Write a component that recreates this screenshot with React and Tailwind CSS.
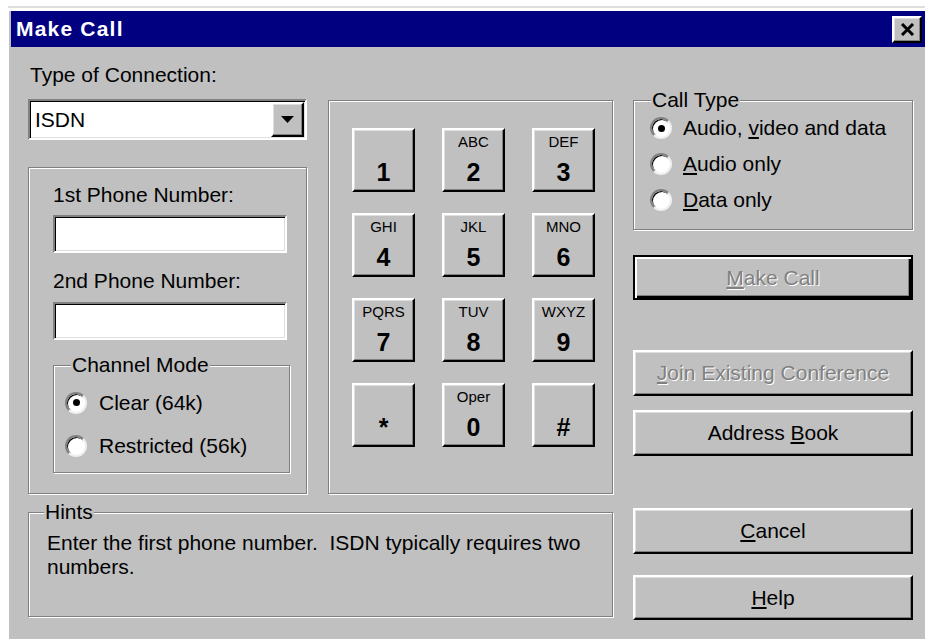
import React from "react";

// Win95-style bevels and borders
const raised =
  "border-2 border-t-white border-l-white border-r-black border-b-black shadow-[inset_-1px_-1px_0_#808080,inset_1px_1px_0_#dfdfdf] bg-[#c0c0c0]";
const sunken =
  "border-2 border-t-[#808080] border-l-[#808080] border-r-white border-b-white shadow-[inset_1px_1px_0_#000,inset_-1px_-1px_0_#dfdfdf] bg-white";
const etched = "border border-[#808080] shadow-[inset_1px_1px_0_#fff,1px_1px_0_#fff]";
const legendCls = "bg-[#c0c0c0] px-[1px] leading-[24px]";

const keys = [
  ["", "1"],
  ["ABC", "2"],
  ["DEF", "3"],
  ["GHI", "4"],
  ["JKL", "5"],
  ["MNO", "6"],
  ["PQRS", "7"],
  ["TUV", "8"],
  ["WXYZ", "9"],
  ["", "*"],
  ["Oper", "0"],
  ["", "#"],
];

function Radio({ checked }) {
  return (
    <span className="flex h-[22px] w-[22px] shrink-0 items-center justify-center rounded-full border-2 border-t-[#808080] border-l-[#808080] border-r-[#efefef] border-b-[#efefef] bg-white shadow-[inset_1px_1px_0_#000]">
      {checked && <span className="h-[7px] w-[7px] rounded-full bg-black" />}
    </span>
  );
}

function RadioRow({ checked, children, className = "" }) {
  return (
    <div className={`flex items-center ${className}`}>
      <Radio checked={checked} />
      <span className="whitespace-nowrap">{children}</span>
    </div>
  );
}

function Key({ letters, digit }) {
  return (
    <div className={`flex h-[64px] w-[63px] flex-col items-center ${raised}`}>
      <div className="mt-[4px] h-[16px] text-[15px] leading-[16px]">{letters || "\u00a0"}</div>
      <div className="mt-[8px] text-[25px] font-bold leading-[28px]">{digit}</div>
    </div>
  );
}

function Button({ children, disabled, primary, className = "" }) {
  const frame = primary
    ? "border-2 border-black bg-[#c0c0c0] shadow-[inset_2px_2px_0_#fff,inset_-2px_-2px_0_#000,inset_-3px_-3px_0_#808080]"
    : raised;
  const text = disabled ? "text-[#808080] [text-shadow:1px_1px_0_#fff]" : "text-black";
  return (
    <div className={`flex w-[280px] items-center justify-center ${frame} ${text} ${className}`}>
      <span className="whitespace-nowrap">{children}</span>
    </div>
  );
}

export default function App() {
  return (
    <div className="flex h-[639px] w-[925px] flex-col overflow-hidden bg-white font-['Liberation_Sans',Arial,sans-serif] text-[21px] leading-[24px] text-black">
      <div className="h-[6px]" />
      <div className="ml-[8px] h-[2px] bg-[#dedede]" />
      <div className="h-[3px]" />

      <div className="ml-[9px] flex flex-1 flex-col bg-[#c0c0c0]">
        {/* title bar */}
        <div className="ml-[2px] flex h-[36px] items-center bg-[#000080] pl-[5px] pr-[3px]">
          <span className="text-[21px] font-bold tracking-[1.2px] text-white">Make Call</span>
          <div className={`ml-auto flex h-[27px] w-[30px] items-center justify-center ${raised}`}>
            <svg width="15" height="13" viewBox="0 0 15 13">
              <path d="M2 1 L13 12 M13 1 L2 12" stroke="#000" strokeWidth="3" />
            </svg>
          </div>
        </div>

        <div className="flex pl-[19px]">
          {/* left area: connection, numbers, keypad, hints */}
          <div className="flex w-[585px] flex-col">
            <div className="flex items-start">
              <div className="flex w-[279px] flex-col">
                <div className="mt-[16px] pl-[2px]">Type of Connection:</div>
                <div className={`mt-[12px] flex h-[41px] items-center ${sunken}`}>
                  <span className="pl-[5px]">ISDN</span>
                  <div className={`ml-auto mr-[1px] flex h-[35px] w-[33px] items-center justify-center ${raised}`}>
                    <svg width="13" height="7" viewBox="0 0 13 7">
                      <polygon points="0,0 13,0 6.5,7" fill="#000" />
                    </svg>
                  </div>
                </div>

                <div className={`mt-[27px] flex h-[327px] flex-col pl-[24px] pt-[15px] ${etched}`}>
                  <div>1st Phone Number:</div>
                  <div className={`mt-[8px] h-[38px] w-[234px] ${sunken}`} />
                  <div className="mt-[16px]">2nd Phone Number:</div>
                  <div className={`mt-[9px] h-[38px] w-[234px] ${sunken}`} />
                  <fieldset className={`mt-[13px] h-[120px] w-[237px] pl-[11px] ${etched}`}>
                    <legend className={`ml-[6px] ${legendCls}`}>Channel Mode</legend>
                    <RadioRow checked className="mt-[4px] h-[43px] gap-[12px]">
                      Clear (64k)
                    </RadioRow>
                    <RadioRow className="h-[43px] gap-[12px]">Restricted (56k)</RadioRow>
                  </fieldset>
                </div>
              </div>

              {/* dial pad */}
              <div className={`ml-[21px] mt-[53px] h-[394px] w-[285px] pl-[23px] pt-[27px] ${etched}`}>
                <div className="grid grid-cols-[63px_63px_63px] gap-x-[27px] gap-y-[21px]">
                  {keys.map(([letters, digit]) => (
                    <Key key={digit} letters={letters} digit={digit} />
                  ))}
                </div>
              </div>
            </div>

            <fieldset className={`mt-[6px] h-[117px] pl-[18px] ${etched}`}>
              <legend className={`ml-[-3px] ${legendCls}`}>Hints</legend>
              <div className="mt-[7px] whitespace-pre">
                {"Enter the first phone number.  ISDN typically requires two"}
                <br />
                numbers.
              </div>
            </fieldset>
          </div>

          {/* right column */}
          <div className="ml-[20px] flex w-[280px] flex-col">
            <fieldset className={`mt-[41px] h-[142px] pl-[16px] ${etched}`}>
              <legend className={`ml-[1px] ${legendCls}`}>Call Type</legend>
              <div className="-mt-[2px]">
                <RadioRow checked className="h-[36px] gap-[11px]">
                  Audio, <u>v</u>ideo and data
                </RadioRow>
                <RadioRow className="h-[36px] gap-[11px]">
                  <u>A</u>udio only
                </RadioRow>
                <RadioRow className="h-[36px] gap-[11px]">
                  <u>D</u>ata only
                </RadioRow>
              </div>
            </fieldset>

            <Button primary disabled className="mt-[25px] h-[45px]">
              <u>M</u>ake Call
            </Button>
            <Button disabled className="mt-[50px] h-[46px]">
              <u>J</u>oin Existing Conference
            </Button>
            <Button className="mt-[14px] h-[46px]">
              Address <u>B</u>ook
            </Button>
            <Button className="mt-[52px] h-[46px]">
              <u>C</u>ancel
            </Button>
            <Button className="mt-[21px] h-[45px]">
              <u>H</u>elp
            </Button>
          </div>
        </div>
      </div>
    </div>
  );
}
